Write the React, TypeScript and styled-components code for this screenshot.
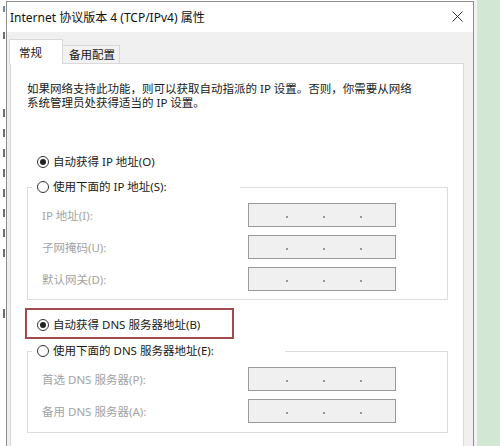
import React from "react";
import styled, { createGlobalStyle } from "styled-components";

const GlobalStyle = createGlobalStyle`
  html, body { margin: 0; padding: 0; }
  body {
    width: 500px;
    height: 446px;
    overflow: hidden;
    background: #ffffff;
    font-family: "Noto Sans", "Noto Sans CJK SC", sans-serif;
    font-size: 11.5px;
    color: #1a1a1a;
  }
  * { box-sizing: border-box; }
`;

const Screen = styled.div`
  display: flex;
  width: 500px;
  height: 446px;
  overflow: hidden;
`;

const BackdropEdge = styled.div`
  width: 6px;
  flex: none;
  overflow: hidden;
  background: #ffffff;
  display: flex;
  flex-direction: column;
  align-items: flex-end;
  padding: 2px 1px 0 0;
`;

const GlyphScrap = styled.span<{ $top: number; $h?: number; $color?: string }>`
  display: block;
  margin-top: ${(p) => p.$top}px;
  width: 2px;
  height: ${(p) => p.$h ?? 8}px;
  background: ${(p) => p.$color ?? "#4a4a4a"};
  opacity: 0.8;
`;

const Dialog = styled.div`
  width: 468px;
  flex: none;
  margin-top: 1px;
  border: 1px solid #8e8e8e;
  border-bottom: none;
  background: #f0f0f0;
  display: flex;
  flex-direction: column;
`;

const TitleBar = styled.div`
  height: 30px;
  flex: none;
  background: #ffffff;
  display: flex;
  align-items: center;
  justify-content: space-between;
  padding-left: 3px;
`;

const Title = styled.span`
  font-size: 12px;
  color: #111;
  white-space: nowrap;
`;

const CloseButton = styled.div`
  width: 32px;
  height: 30px;
  display: flex;
  align-items: center;
  justify-content: center;
  margin-top: -2px;
`;

const Body = styled.div`
  flex: 1;
  display: flex;
  flex-direction: column;
  padding: 7px 9px 0 3px;
`;

const TabList = styled.div`
  display: flex;
  align-items: flex-end;
  height: 25px;
  margin-bottom: -1px;
  margin-left: -1px;
  position: relative;
  z-index: 1;
`;

const Tab = styled.div<{ $active?: boolean }>`
  display: flex;
  align-items: center;
  white-space: nowrap;
  height: ${(p) => (p.$active ? 25 : 19)}px;
  padding: ${(p) => (p.$active ? "0 20px 0 9px" : "0 4px 1px 6px")};
  background: ${(p) => (p.$active ? "#ffffff" : "#f2f2f2")};
  border: 1px solid #d9d9d9;
  border-bottom: ${(p) => (p.$active ? "none" : "1px solid #d9d9d9")};
  border-left: ${(p) => (p.$active ? "1px solid #d9d9d9" : "none")};
  color: #1a1a1a;
`;

const Panel = styled.div`
  flex: 1;
  background: #ffffff;
  border: 1px solid #d9d9d9;
  border-bottom: none;
  padding-top: 18px;
  display: flex;
  flex-direction: column;
  align-items: flex-start;
`;

const Description = styled.p`
  margin: 0 0 0 16px;
  line-height: 14px;
  white-space: nowrap;
`;

const RadioRow = styled.div<{ $mt?: number }>`
  display: flex;
  align-items: center;
  gap: 4px;
  height: 16px;
  line-height: 16px;
  white-space: nowrap;
  margin-top: ${(p) => p.$mt ?? 0}px;
  margin-left: ${(p) => (p.$mt !== undefined ? 26 : 0)}px;
`;

const Radio = styled.span<{ $checked?: boolean }>`
  width: 12px;
  height: 12px;
  flex: none;
  border-radius: 50%;
  border: 1px solid #333;
  background: #fff;
  display: flex;
  align-items: center;
  justify-content: center;
  &::after {
    content: "";
    width: 6px;
    height: 6px;
    border-radius: 50%;
    background: #222;
    display: ${(p) => (p.$checked ? "block" : "none")};
  }
`;

const Annotated = styled.div`
  position: relative;
  margin: 17px 0 0 26px;
  &::after {
    content: "";
    position: absolute;
    left: -12px;
    top: -9px;
    width: 205px;
    height: 27px;
    border: 2px solid #a14b50;
    pointer-events: none;
  }
`;

const Group = styled.fieldset<{ $mt: number }>`
  align-self: stretch;
  margin: ${(p) => p.$mt}px 15px 0 16px;
  padding: 0;
  border: 1px solid #dcdcdc;
  min-width: 0;
`;

const GroupLegend = styled.legend<{ $width: number }>`
  padding: 0 0 0 5px;
  margin-left: 4px;
  width: ${(p) => p.$width}px;
  height: 16px;
`;

const Fields = styled.div<{ $pb: number }>`
  display: flex;
  flex-direction: column;
  gap: 8px;
  padding: 8px 0 ${(p) => p.$pb}px 14px;
`;

const FieldRow = styled.div`
  display: flex;
  align-items: center;
  height: 24px;
`;

const FieldLabel = styled.span`
  width: 206px;
  flex: none;
  color: #a3a3a3;
  white-space: nowrap;
`;

const IPBox = styled.div`
  width: 148px;
  height: 24px;
  border: 1px solid #9a9a9a;
  background: #f0f0f0;
  display: flex;
  align-items: center;
  padding-left: 37px;
  gap: 35px;
`;

const Dot = styled.span`
  width: 2px;
  height: 2px;
  border-radius: 50%;
  background: #7a7a7a;
  margin-top: 4px;
`;

const RightEdge = styled.div`
  flex: 1;
  border-left: 3px solid #f3f3f3;
  background: #d3e8d4;
`;

const CloseIcon = () => (
  <svg width="11" height="11" viewBox="0 0 11 11">
    <path d="M0.5 0.5 L10.5 10.5 M10.5 0.5 L0.5 10.5" stroke="#333" strokeWidth="1" fill="none" />
  </svg>
);

const IPField = ({ label }: { label: string }) => (
  <FieldRow>
    <FieldLabel>{label}</FieldLabel>
    <IPBox>
      <Dot />
      <Dot />
      <Dot />
    </IPBox>
  </FieldRow>
);

export default function App() {
  return (
    <>
      <GlobalStyle />
      <Screen>
        <BackdropEdge>
          <GlyphScrap $top={4} $h={6} $color="#4a6aa8" />
          <GlyphScrap $top={20} $h={7} />
          <GlyphScrap $top={70} $h={8} />
          <GlyphScrap $top={12} $h={8} />
          <GlyphScrap $top={12} $h={8} />
          <GlyphScrap $top={12} $h={8} />
          <GlyphScrap $top={12} $h={8} />
          <GlyphScrap $top={12} $h={8} />
          <GlyphScrap $top={12} $h={8} />
          <GlyphScrap $top={12} $h={8} />
          <GlyphScrap $top={52} $h={9} />
        </BackdropEdge>
        <Dialog>
          <TitleBar>
            <Title>Internet 协议版本 4 (TCP/IPv4) 属性</Title>
            <CloseButton>
              <CloseIcon />
            </CloseButton>
          </TitleBar>
          <Body>
            <TabList>
              <Tab $active>常规</Tab>
              <Tab>备用配置</Tab>
            </TabList>
            <Panel>
              <Description>
                如果网络支持此功能，则可以获取自动指派的 IP 设置。否则，你需要从网络
                <br />
                系统管理员处获得适当的 IP 设置。
              </Description>

              <RadioRow $mt={44}>
                <Radio $checked />
                <span>自动获得 IP 地址(O)</span>
              </RadioRow>

              <Group $mt={9}>
                <GroupLegend $width={208}>
                  <RadioRow>
                    <Radio />
                    <span>使用下面的 IP 地址(S):</span>
                  </RadioRow>
                </GroupLegend>
                <Fields $pb={8}>
                  <IPField label="IP 地址(I):" />
                  <IPField label="子网掩码(U):" />
                  <IPField label="默认网关(D):" />
                </Fields>
              </Group>

              <Annotated>
                <RadioRow>
                  <Radio $checked />
                  <span>自动获得 DNS 服务器地址(B)</span>
                </RadioRow>
              </Annotated>

              <Group $mt={10}>
                <GroupLegend $width={253}>
                  <RadioRow>
                    <Radio />
                    <span>使用下面的 DNS 服务器地址(E):</span>
                  </RadioRow>
                </GroupLegend>
                <Fields $pb={9}>
                  <IPField label="首选 DNS 服务器(P):" />
                  <IPField label="备用 DNS 服务器(A):" />
                </Fields>
              </Group>
            </Panel>
          </Body>
        </Dialog>
        <RightEdge />
      </Screen>
    </>
  );
}
